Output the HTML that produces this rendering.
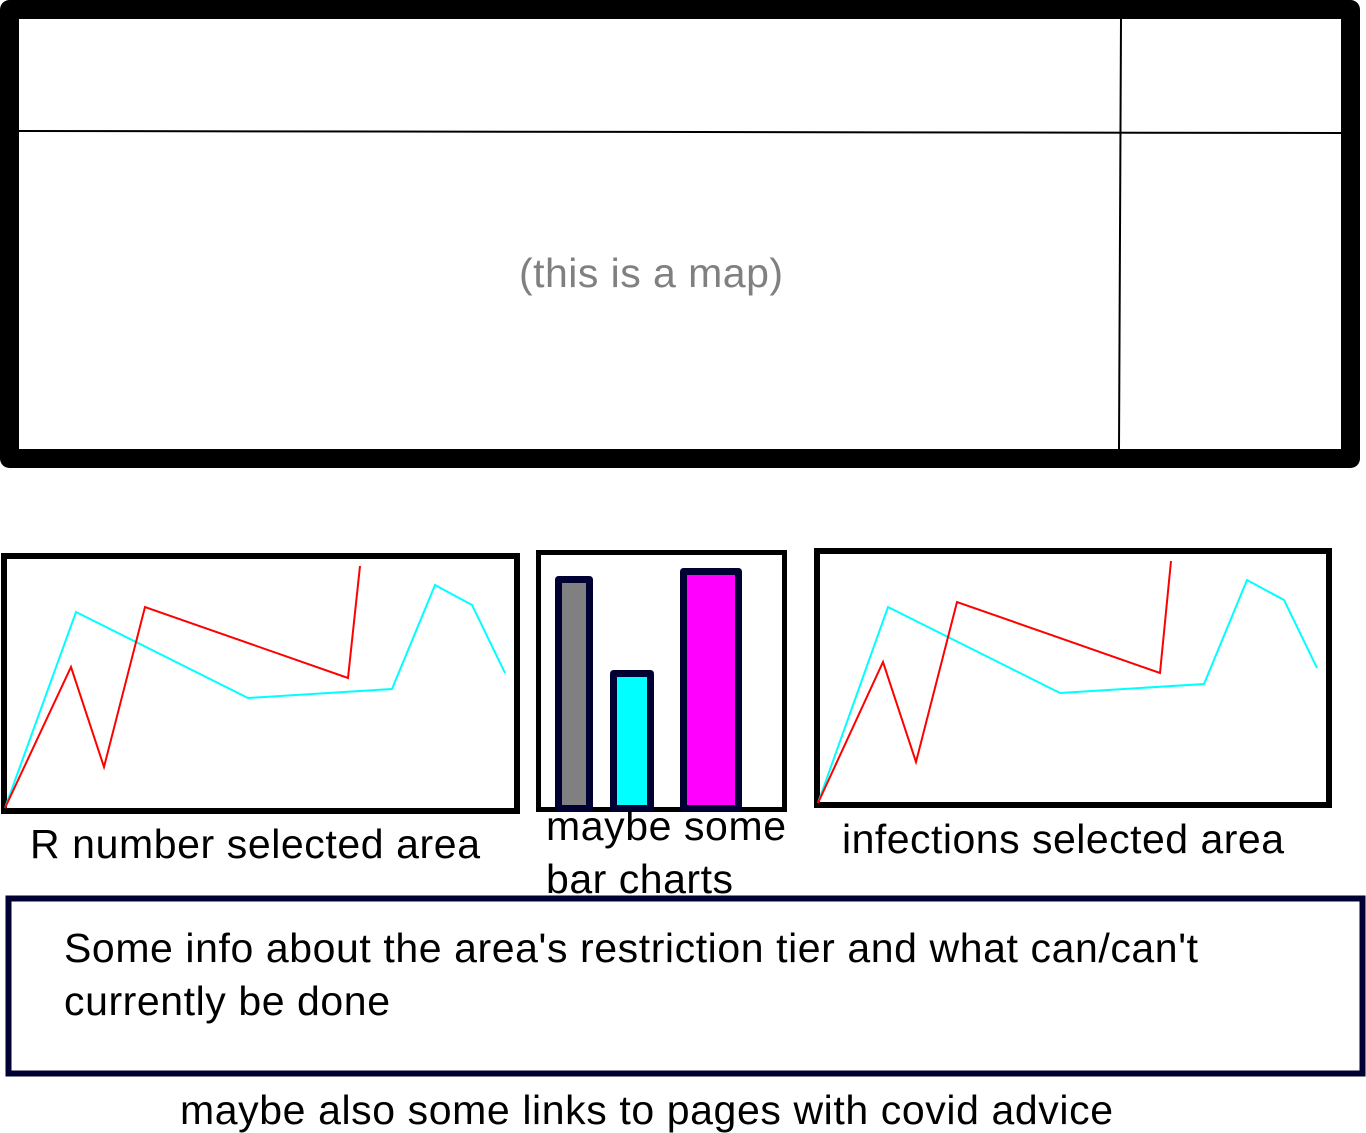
<!DOCTYPE html>
<html><head><style>html,body{margin:0;padding:0;background:#fff}svg{display:block}</style></head><body>
<svg width="1366" height="1133" viewBox="0 0 1366 1133" xmlns="http://www.w3.org/2000/svg" font-family="Liberation Sans, sans-serif">
<rect x="9.5" y="9.5" width="1341" height="449" fill="#fff" stroke="#000" stroke-width="19" stroke-linejoin="round"/>
<line x1="19" y1="131" x2="1342" y2="133" stroke="#000" stroke-width="2"/>
<line x1="1121" y1="19" x2="1119" y2="449" stroke="#000" stroke-width="2"/>
<text x="519" y="287" font-size="41" fill="#808080" textLength="264">(this is a map)</text>

<rect x="4" y="556" width="513" height="255" fill="none" stroke="#000" stroke-width="6"/>
<polyline points="5,808 76,612 248,698 392,689 435,585 472,605 505,673" fill="none" stroke="#0ff" stroke-width="2"/>
<polyline points="5,808 71,667 104,767 145,607 348,678 360,566" fill="none" stroke="#f00" stroke-width="2"/>
<text x="30" y="858" font-size="41" textLength="450">R number selected area</text>

<rect x="538.5" y="552.5" width="246" height="257" fill="none" stroke="#000" stroke-width="5"/>
<rect x="558.5" y="579.5" width="31" height="229" fill="#808080" stroke="#000033" stroke-width="7" stroke-linejoin="round"/>
<rect x="613.5" y="673.5" width="37" height="135" fill="#0ff" stroke="#000033" stroke-width="7" stroke-linejoin="round"/>
<rect x="683.5" y="571.5" width="55" height="237" fill="#f0f" stroke="#000033" stroke-width="7" stroke-linejoin="round"/>
<text x="546" y="840" font-size="41" textLength="240">maybe some</text>
<text x="546" y="893" font-size="41" textLength="187">bar charts</text>

<rect x="817" y="551" width="512" height="254" fill="none" stroke="#000" stroke-width="6"/>
<polyline points="818,803 888,607 1060,693 1204,684 1247,580 1284,600 1317,668" fill="none" stroke="#0ff" stroke-width="2"/>
<polyline points="818,803 883,662 916,762 957,602 1160,673 1171,561" fill="none" stroke="#f00" stroke-width="2"/>
<text x="842" y="853" font-size="41" textLength="442">infections selected area</text>

<rect x="8.5" y="898.5" width="1354" height="175" fill="none" stroke="#000033" stroke-width="6"/>
<text x="64" y="962" font-size="41" textLength="1134">Some info about the area's restriction tier and what can/can't</text>
<text x="64" y="1015" font-size="41" textLength="326">currently be done</text>
<text x="180" y="1124" font-size="41" textLength="933">maybe also some links to pages with covid advice</text>
</svg>
</body></html>
